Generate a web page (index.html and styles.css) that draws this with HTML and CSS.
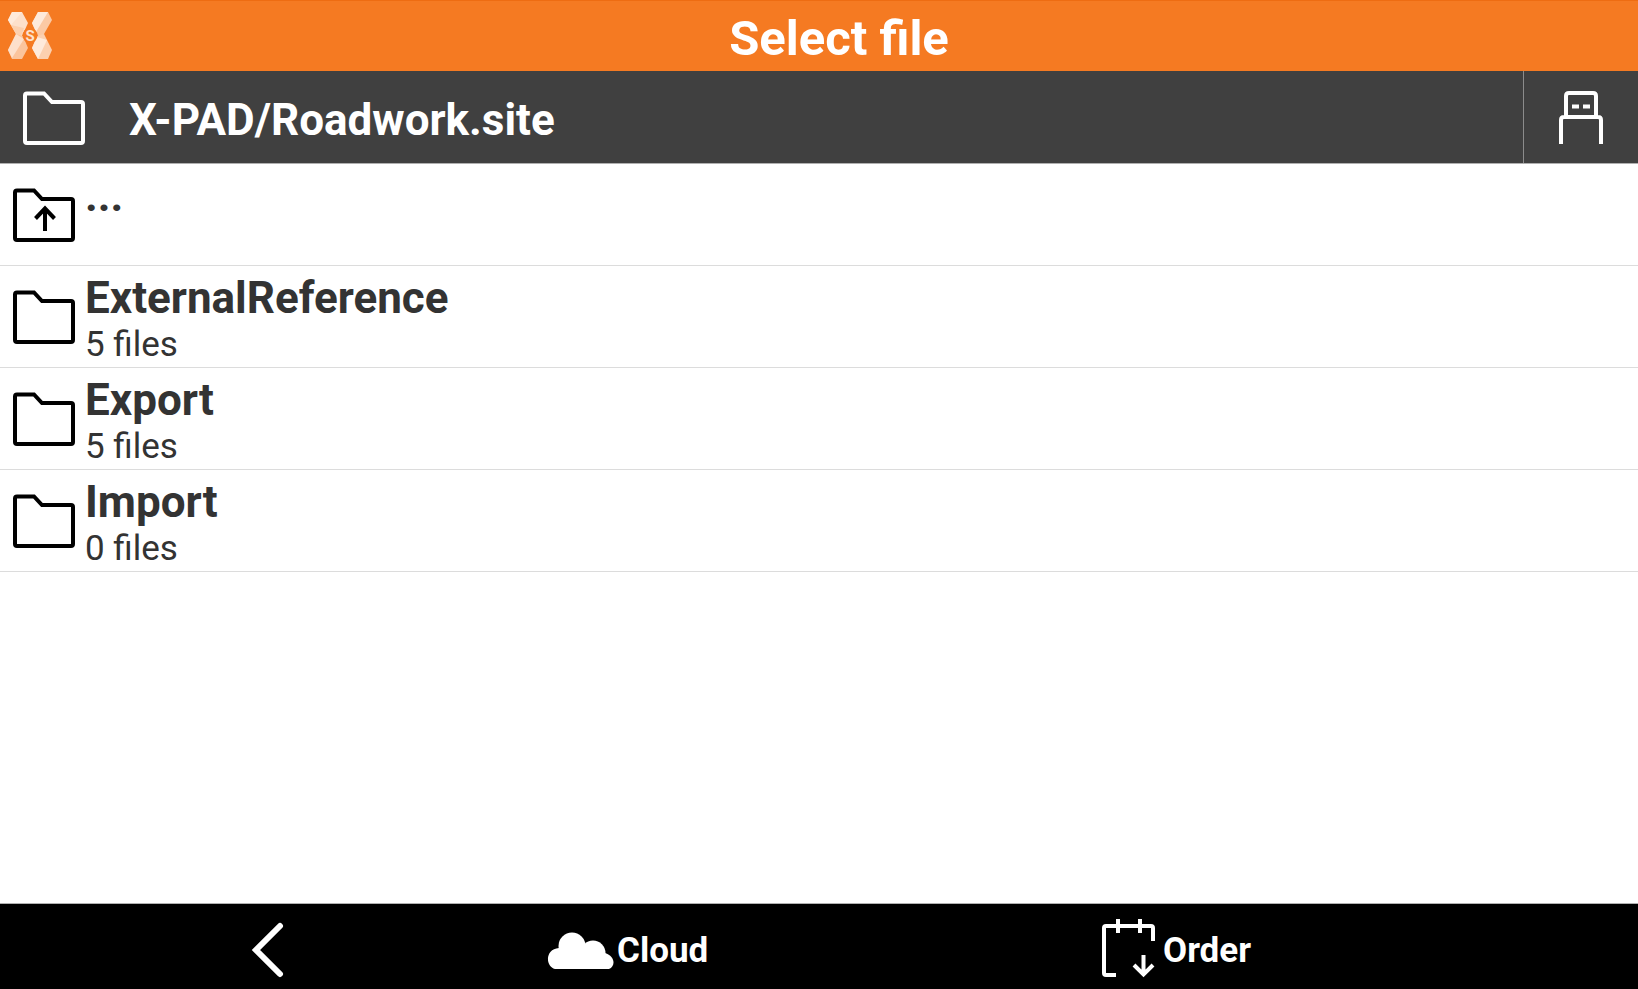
FILE: index.html
```html
<!DOCTYPE html>
<html lang="en">
<head>
    <meta charset="UTF-8">
    <meta name="viewport" content="width=device-width, initial-scale=1.0">
    <title>Select file</title>
    <link rel="stylesheet" href="styles.css">
</head>
<body>

    <header class="titlebar">
        <svg class="logo" viewBox="0 0 44 48" aria-hidden="true">
            <path d="M0 8 L4 0 H14 L20 11 L15 22 L12 27 L8 22Z" fill="#fde0cb"/>
            <path d="M0 8 L4 0 H14 L3 13Z" fill="#feeadb"/>
            <path d="M0 8 L3 13 L16 16 L12 27 L8 22Z" fill="#fcd0af"/>
            <path d="M44 8 L40 0 H30 L24 11 L29 22 L32 27 L36 22Z" fill="#fbc9a4"/>
            <path d="M30 0 H40 L28 20 L24 11Z" fill="#feeadb"/>
            <path d="M0 38 L4 47 H14 L20 36 L15 24 L8 22Z" fill="#fbc49c"/>
            <path d="M0 38 L8 22 L16 27 L4 46Z" fill="#fde0cb"/>
            <path d="M44 38 L40 47 H30 L24 36 L29 24 L36 22Z" fill="#fcd0af"/>
            <path d="M24 36 L29 25 L39 28 L30 47Z" fill="#feeadb"/>
            <circle cx="22" cy="23.500" r="7.500" fill="#f57a22"/>
            <text class="logo-letter" x="22" y="29" text-anchor="middle">S</text>
        </svg>
        <h1>Select file</h1>
    </header>

    <div class="pathbar">
        <svg class="folder" viewBox="0 0 62 54" aria-hidden="true">
            <path d="M4 2.500 H21 L29 11 H58 Q60 11 60 13 V50 Q60 52 58 52 H4 Q2 52 2 50 V4.500 Q2 2.500 4 2.500Z"/>
        </svg>
        <span class="path">X-PAD/Roadwork.site</span>
        <button class="usb" aria-label="USB storage">
            <svg viewBox="0 0 44 54" aria-hidden="true">
                <path d="M2 53 V29 Q2 26 5 26 H39 Q42 26 42 29 V53 M7 26 V5 Q7 2 10 2 H34 Q37 2 37 5 V26"/>
                <path d="M13 15.500 H20 M24 15.500 H31"/>
            </svg>
        </button>
    </div>

    <ul class="files">
        <li>
            <a href="#">
                <svg class="folder" viewBox="0 0 62 54" aria-hidden="true">
                    <path d="M4 2.500 H21 L29 11 H58 Q60 11 60 13 V50 Q60 52 58 52 H4 Q2 52 2 50 V4.500 Q2 2.500 4 2.500Z"/>
                    <path d="M32 43 V21 M22.500 30.500 L32 20.500 L41.500 30.500"/>
                </svg>
                <span class="info"><span class="name">...</span></span>
            </a>
        </li>
        <li>
            <a href="#">
                <svg class="folder" viewBox="0 0 62 54" aria-hidden="true">
                    <path d="M4 2.500 H21 L29 11 H58 Q60 11 60 13 V50 Q60 52 58 52 H4 Q2 52 2 50 V4.500 Q2 2.500 4 2.500Z"/>
                </svg>
                <span class="info">
                    <span class="name">ExternalReference</span>
                    <span class="count">5 files</span>
                </span>
            </a>
        </li>
        <li>
            <a href="#">
                <svg class="folder" viewBox="0 0 62 54" aria-hidden="true">
                    <path d="M4 2.500 H21 L29 11 H58 Q60 11 60 13 V50 Q60 52 58 52 H4 Q2 52 2 50 V4.500 Q2 2.500 4 2.500Z"/>
                </svg>
                <span class="info">
                    <span class="name">Export</span>
                    <span class="count">5 files</span>
                </span>
            </a>
        </li>
        <li>
            <a href="#">
                <svg class="folder" viewBox="0 0 62 54" aria-hidden="true">
                    <path d="M4 2.500 H21 L29 11 H58 Q60 11 60 13 V50 Q60 52 58 52 H4 Q2 52 2 50 V4.500 Q2 2.500 4 2.500Z"/>
                </svg>
                <span class="info">
                    <span class="name">Import</span>
                    <span class="count">0 files</span>
                </span>
            </a>
        </li>
    </ul>

    <footer class="toolbar">
        <button class="back" aria-label="Back">
            <svg viewBox="0 0 70 70" aria-hidden="true">
                <path class="chevron" d="M48 10 L24 34 L48 58"/>
            </svg>
        </button>
        <button>
            <svg viewBox="0 0 70 70" aria-hidden="true">
                <circle class="cloud" cx="26" cy="30" r="13.500"/>
                <circle class="cloud" cx="47" cy="37" r="12.500"/>
                <path class="cloud" d="M9 53 C-1 50 -1 33 13 32 L26 27 L40 29 L59 37 C69 40 70 50 63 53Z"/>
            </svg>
            Cloud
        </button>
        <button>
            <svg viewBox="0 0 70 70" aria-hidden="true">
                <path class="line" d="M24 59 H14 Q12 59 12 57 V12 Q12 10 14 10 H59 Q61 10 61 12 V25 M26 3 V17 M48 3 V17"/>
                <path class="line" d="M51.500 39 V58 M42 49 L51.500 58.500 L61 49"/>
            </svg>
            Order
        </button>
    </footer>

</body>
</html>
```

FILE: styles.css
```css
* {
    box-sizing: border-box;
}
body {
    margin: 0;
    min-height: 100vh;
    display: flex;
    flex-direction: column;
    font-family: Roboto, sans-serif;
    background: #fff;
    color: #333;
}
button {
    border: none;
    background: none;
    padding: 0;
    font: inherit;
    color: inherit;
    cursor: pointer;
}
svg {
    display: block;
    flex: none;
}
.titlebar {
    display: flex;
    align-items: center;
    height: 71px;
    padding: 0 12px 0 8px;
    background: #f57a22;
    border-top: 1px solid #ee6c12;
    color: #fff;
}
.logo {
    width: 44px;
    height: 48px;
}
.logo-letter {
    font-size: 15px;
    font-weight: bold;
    fill: #fde2cf;
}
.titlebar h1 {
    flex: 1;
    margin: 0;
    padding-top: 6px;
    font-size: 49px;
    line-height: 64px;
    text-align: center;
}
.pathbar {
    display: flex;
    align-items: center;
    height: 93px;
    padding: 2px 0 0 23px;
    background: #404040;
    border-bottom: 1px solid #b0b0b0;
    color: #fff;
}
.folder {
    width: 62px;
    height: 54px;
    fill: none;
    stroke: currentColor;
    stroke-width: 4;
}
.path {
    flex: 1;
    padding: 4px 0 0 44px;
    font-size: 44px;
    font-weight: bold;
}
.usb {
    display: flex;
    align-items: center;
    justify-content: center;
    align-self: stretch;
    width: 115px;
    margin-top: -2px;
    padding-top: 2px;
    border-left: 1px solid #8c8c8c;
}
.usb svg {
    width: 44px;
    height: 54px;
    fill: none;
    stroke: #fff;
    stroke-width: 4;
}
.files {
    flex: 1;
    margin: 0;
    padding: 0;
    list-style: none;
}
.files a {
    display: flex;
    align-items: center;
    gap: 10px;
    height: 102px;
    padding-left: 13px;
    border-bottom: 1px solid #dcdcdc;
    color: #333;
    text-decoration: none;
}
.files .folder {
    color: #000;
}
.info {
    align-self: flex-start;
    padding-top: 8px;
}
.name,
.count {
    display: block;
}
.name {
    font-size: 44px;
    font-weight: bold;
    line-height: 48px;
}
.count {
    font-size: 35px;
    line-height: 45px;
}
.toolbar {
    display: grid;
    grid-template-columns: repeat(3, 1fr);
    height: 86px;
    padding-top: 8px;
    background: #000;
    border-top: 1px solid #b0b0b0;
    color: #fff;
}
.toolbar button {
    display: flex;
    align-items: center;
    gap: 1px;
    font-size: 35px;
    font-weight: bold;
}
.toolbar .back {
    justify-content: center;
    padding-right: 12px;
}
.toolbar svg {
    width: 70px;
    height: 70px;
}
.cloud {
    fill: #fff;
}
.chevron,
.line {
    fill: none;
    stroke: #fff;
    stroke-width: 4;
}
.chevron {
    stroke-width: 6;
    stroke-linecap: round;
}
```
